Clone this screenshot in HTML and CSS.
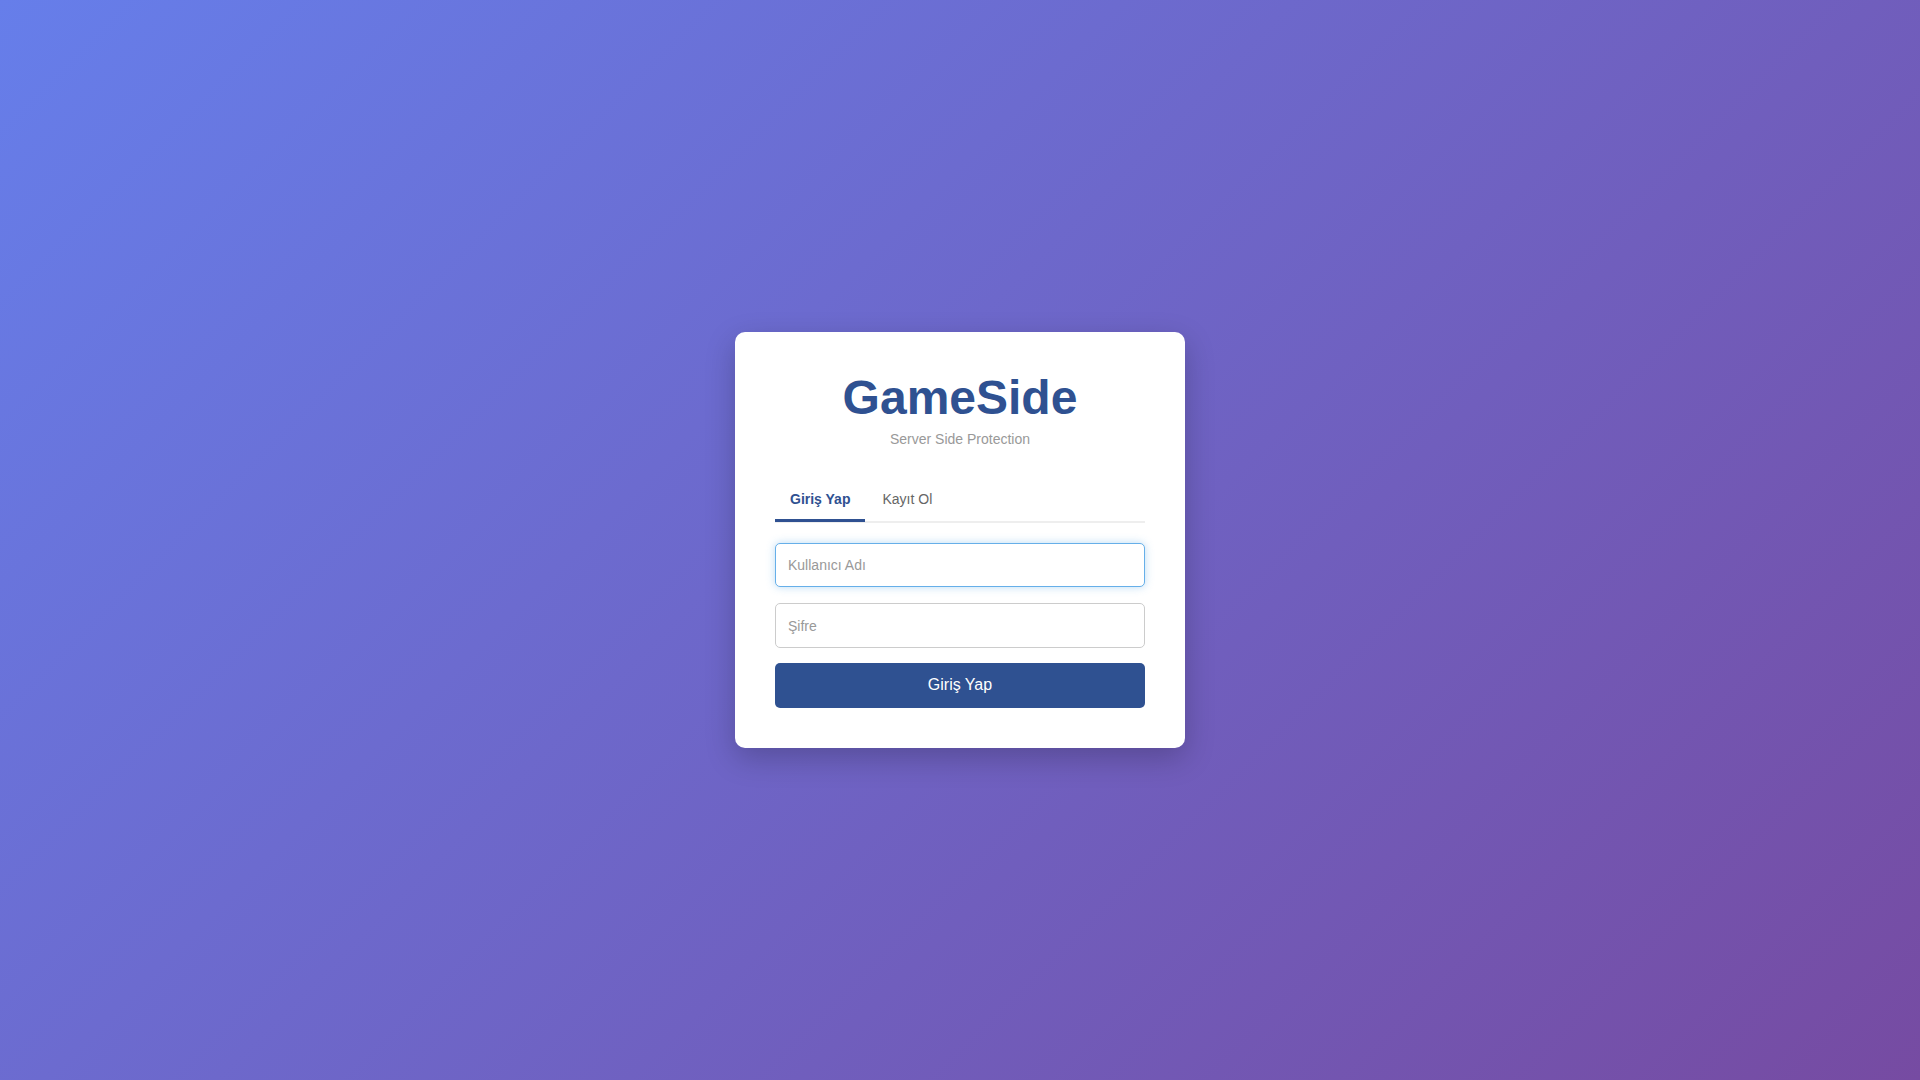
FILE: index.html
```html
<!DOCTYPE html>
<html lang="tr">
<head>
<meta charset="utf-8">
<title>GameSide</title>
<link rel="stylesheet" href="styles.css">
</head>
<body>
<main class="card">
  <header class="brand">
    <h1 class="brand-title">GameSide</h1>
    <p class="brand-sub">Server Side Protection</p>
  </header>
  <nav class="tabs">
    <button class="tab tab-active" type="button">Giriş Yap</button>
    <button class="tab" type="button">Kayıt Ol</button>
  </nav>
  <form class="form">
    <input class="field field-focus" type="text" placeholder="Kullanıcı Adı">
    <input class="field" type="password" placeholder="Şifre">
    <button class="submit" type="button">Giriş Yap</button>
  </form>
</main>
</body>
</html>
```
FILE: styles.css
```css
* { box-sizing: border-box; }
html, body { height: 100%; }
body {
  margin: 0;
  min-height: 100vh;
  font-family: "Liberation Sans", Arial, sans-serif;
  background: linear-gradient(135deg, #667eea 0%, #764ba2 100%);
  display: flex;
  align-items: center;
  justify-content: center;
}
.card {
  width: 450px;
  background: #fff;
  border-radius: 10px;
  padding: 40px;
  box-shadow: 0 10px 30px rgba(0, 0, 0, 0.22);
}
.brand { text-align: center; margin-bottom: 32px; }
.brand-title {
  margin: 0 0 6px;
  font-size: 48px;
  line-height: 1.1;
  font-weight: 700;
  color: #2f5191;
}
.brand-sub {
  margin: 0;
  font-size: 14px;
  color: #999;
}
.tabs {
  display: flex;
  gap: 2px;
  border-bottom: 2px solid #eee;
  margin-bottom: 20px;
}
.tab {
  font-family: inherit;
  font-size: 14px;
  line-height: 16px;
  padding: 12px 15px;
  background: none;
  border: none;
  border-bottom: 3px solid transparent;
  margin-bottom: -1px;
  color: #666;
  cursor: pointer;
}
.tab-active {
  color: #2f5191;
  font-weight: 700;
  border-bottom-color: #2f5191;
}
.form { display: flex; flex-direction: column; }
.field {
  height: 44.5px;
  width: 100%;
  padding: 0 12px;
  font-family: inherit;
  font-size: 14px;
  color: #333;
  border: 1px solid #ccc;
  border-radius: 5px;
  margin-bottom: 16px;
  outline: none;
  background: #fff;
}
.field:nth-of-type(2) { margin-bottom: 15px; }
.field::placeholder { color: #999; }
.field-focus {
  border-color: #66afe9;
  box-shadow: 0 0 8px rgba(102, 175, 233, 0.45);
}
.submit {
  height: 45px;
  width: 100%;
  border: none;
  border-radius: 5px;
  background: #2f5191;
  color: #fff;
  font-family: inherit;
  font-size: 16px;
  cursor: pointer;
}
```
